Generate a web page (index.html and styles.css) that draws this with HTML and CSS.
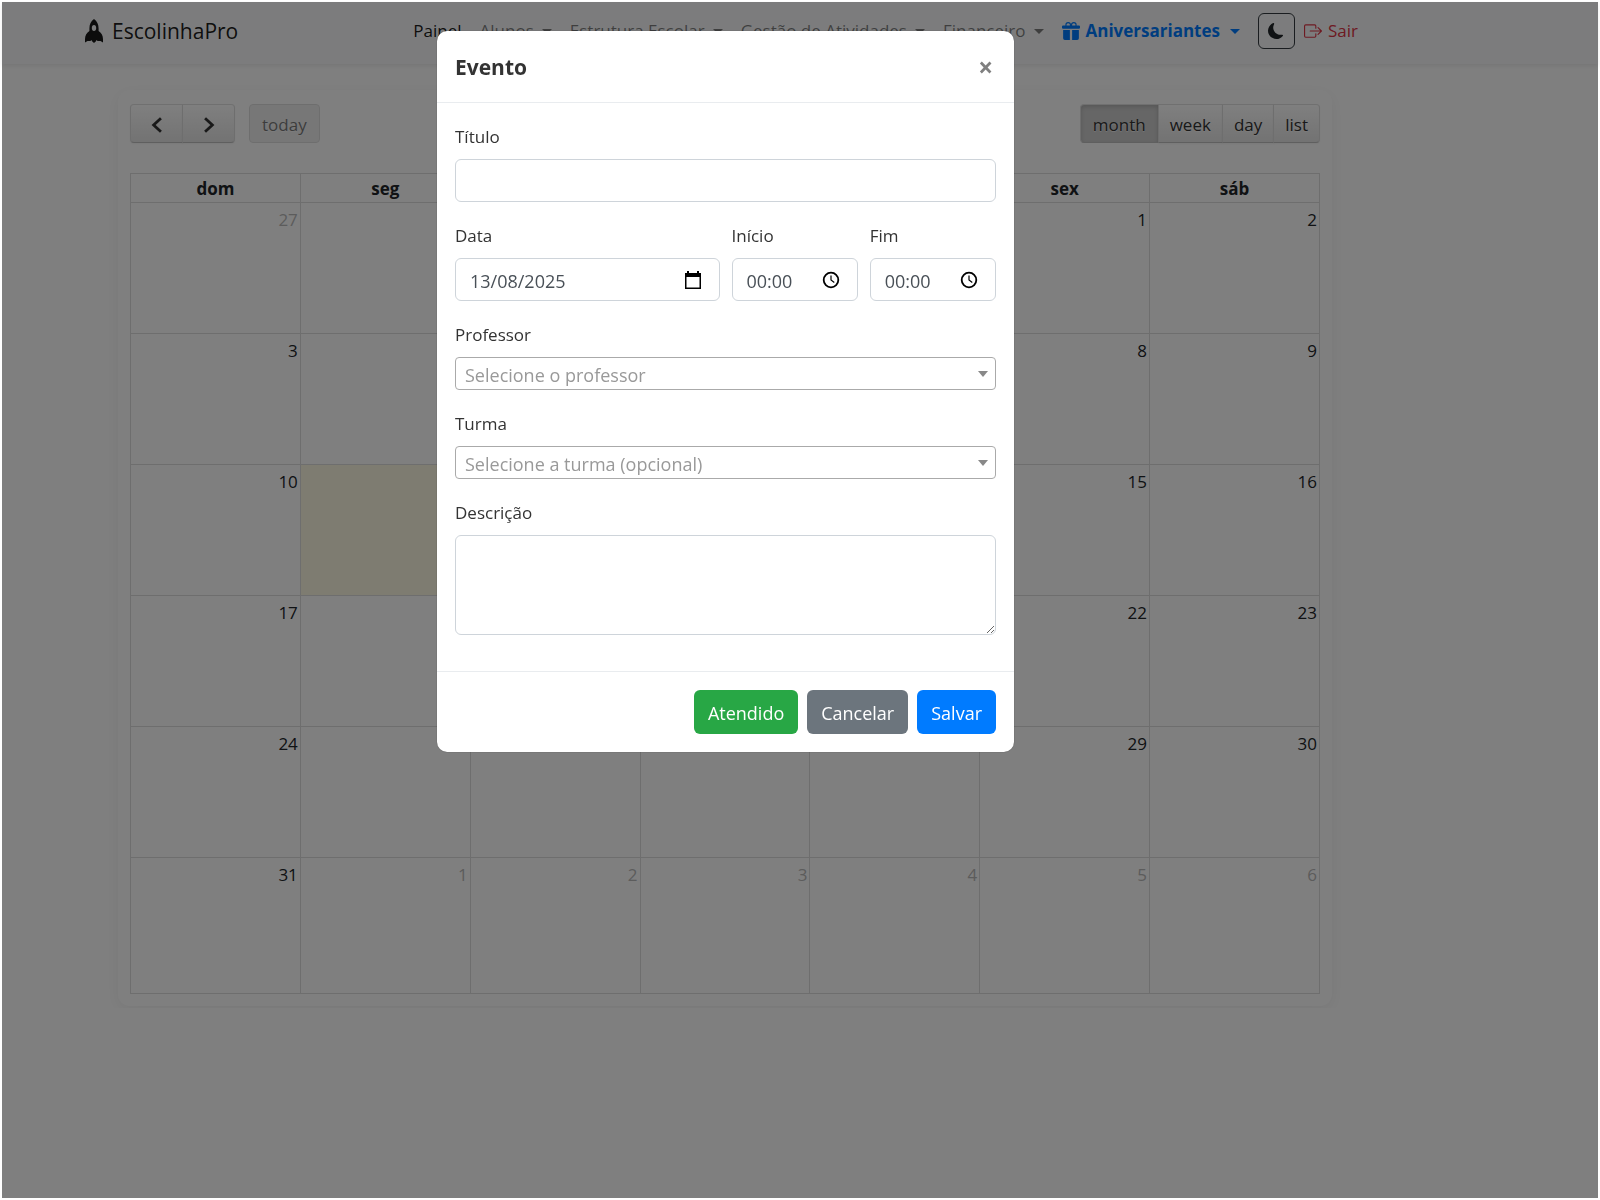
FILE: index.html
```html
<!DOCTYPE html>
<html lang="pt-BR">
<head>
  <meta charset="UTF-8">
  <meta name="viewport" content="width=device-width, initial-scale=1.0">
  <title>EscolinhaPro</title>
  <link rel="stylesheet" href="styles.css">
</head>
<body>
  <nav class="navbar">
    <a class="navbar-brand" href="#">
      <svg class="icon-rocket" viewBox="0 0 18 24" fill="currentColor" aria-hidden="true">
        <path fill-rule="evenodd" d="M9 0c3 2 4.600 5.500 4.600 9.500V12c2.600 1.700 4.400 4.500 4.400 8v3.500L15.500 22h-3l-.8-1-1 1.500L9 24l-1.700-1.500-1-1.500-.8 1h-3L0 23.500V20c0-3.500 1.800-6.300 4.400-8V9.500C4.400 5.500 6 2 9 0zm0 6c-1.300 0-2.200 1.200-2.200 3S7.700 12 9 12s2.200-1.200 2.200-3S10.300 6 9 6z"/>
      </svg>
      EscolinhaPro
    </a>
    <ul class="navbar-nav">
      <li><a class="nav-link active" href="#">Painel</a></li>
      <li><a class="nav-link dropdown" href="#">Alunos</a></li>
      <li><a class="nav-link dropdown" href="#">Estrutura Escolar</a></li>
      <li><a class="nav-link dropdown" href="#">Gestão de Atividades</a></li>
      <li><a class="nav-link dropdown" href="#">Financeiro</a></li>
      <li>
        <a class="nav-link dropdown birthdays" href="#">
          <svg class="icon" viewBox="0 0 16 16" fill="currentColor" aria-hidden="true">
            <path d="M3 2.500a2.500 2.500 0 0 1 5 0 2.500 2.500 0 0 1 5 0v.006c0 .07 0 .27-.038.494H15a1 1 0 0 1 1 1v1a1 1 0 0 1-1 1H1a1 1 0 0 1-1-1V4a1 1 0 0 1 1-1h2.038A3 3 0 0 1 3 2.506zm1.068.5H7v-.5a1.500 1.500 0 1 0-3 0c0 .085.002.274.045.43zM9 3h2.932l.023-.07c.043-.156.045-.345.045-.43a1.500 1.500 0 0 0-3 0zm6 4v7.500a1.500 1.500 0 0 1-1.500 1.500H9V7zM2.500 16A1.500 1.500 0 0 1 1 14.500V7h6v9z"/>
          </svg>
          Aniversariantes
        </a>
      </li>
      <li>
        <button class="btn-theme" type="button" aria-label="Alternar tema">
          <svg class="icon-moon" viewBox="0 0 16 16" fill="currentColor" aria-hidden="true">
            <path d="M6 .278a.77.77 0 0 1 .08.858 7.200 7.200 0 0 0-.878 3.460c0 4.021 3.278 7.277 7.318 7.277q.792-.001 1.533-.16a.79.79 0 0 1 .81.316.73.73 0 0 1-.031.893A8.350 8.350 0 0 1 8.344 16C3.734 16 0 12.286 0 7.710 0 4.266 2.114 1.312 5.124.060A.75.75 0 0 1 6 .278"/>
          </svg>
        </button>
      </li>
      <li>
        <a class="nav-link logout" href="#">
          <svg class="icon" viewBox="0 0 16 16" fill="currentColor" aria-hidden="true">
            <path fill-rule="evenodd" d="M10 12.500a.5.5 0 0 1-.5.5h-8a.5.5 0 0 1-.5-.5v-9a.5.5 0 0 1 .5-.5h8a.5.5 0 0 1 .5.5v2a.5.5 0 0 0 1 0v-2A1.500 1.500 0 0 0 9.500 2h-8A1.500 1.500 0 0 0 0 3.500v9A1.500 1.500 0 0 0 1.500 14h8a1.500 1.500 0 0 0 1.500-1.500v-2a.5.5 0 0 0-1 0z"/>
            <path fill-rule="evenodd" d="M15.854 8.354a.5.5 0 0 0 0-.708l-3-3a.5.5 0 0 0-.708.708L14.293 7.500H5.500a.5.5 0 0 0 0 1h8.793l-2.147 2.146a.5.5 0 0 0 .708.708z"/>
          </svg>
          Sair
        </a>
      </li>
    </ul>
  </nav>

  <main class="container">
    <div class="calendar">
      <div class="toolbar">
        <div class="toolbar-left">
          <div class="btn-group">
            <button class="fc-button fc-arrow" type="button" aria-label="Anterior">
              <svg viewBox="0 0 12 16" aria-hidden="true"><path d="M9.500 2 3 8l6.500 6"/></svg>
            </button>
            <button class="fc-button fc-arrow" type="button" aria-label="Próximo">
              <svg viewBox="0 0 12 16" aria-hidden="true"><path d="M2.500 2 9 8l-6.500 6"/></svg>
            </button>
          </div>
          <button class="fc-button fc-today" type="button" disabled>today</button>
        </div>
        <div class="btn-group">
          <button class="fc-button fc-active" type="button">month</button>
          <button class="fc-button" type="button">week</button>
          <button class="fc-button" type="button">day</button>
          <button class="fc-button" type="button">list</button>
        </div>
      </div>
      <table class="month">
        <thead>
          <tr><th>dom</th><th>seg</th><th>ter</th><th>qua</th><th>qui</th><th>sex</th><th>sáb</th></tr>
        </thead>
        <tbody>
          <tr><td class="other">27</td><td class="other">28</td><td class="other">29</td><td class="other">30</td><td class="other">31</td><td>1</td><td>2</td></tr>
          <tr><td>3</td><td>4</td><td>5</td><td>6</td><td>7</td><td>8</td><td>9</td></tr>
          <tr><td>10</td><td class="today">11</td><td>12</td><td>13</td><td>14</td><td>15</td><td>16</td></tr>
          <tr><td>17</td><td>18</td><td>19</td><td>20</td><td>21</td><td>22</td><td>23</td></tr>
          <tr><td>24</td><td>25</td><td>26</td><td>27</td><td>28</td><td>29</td><td>30</td></tr>
          <tr><td>31</td><td class="other">1</td><td class="other">2</td><td class="other">3</td><td class="other">4</td><td class="other">5</td><td class="other">6</td></tr>
        </tbody>
      </table>
    </div>
  </main>

  <div class="backdrop">
    <form class="modal" role="dialog" aria-labelledby="modal-title">
      <div class="modal-header">
        <h5 class="modal-title" id="modal-title">Evento</h5>
        <button class="close" type="button" aria-label="Fechar">×</button>
      </div>
      <div class="modal-body">
        <div class="form-group">
          <label for="titulo">Título</label>
          <input class="form-control" type="text" id="titulo">
        </div>
        <div class="form-row">
          <div class="form-group">
            <label for="data">Data</label>
            <div class="picker">
              <input class="form-control" type="text" id="data" value="13/08/2025">
              <svg class="picker-icon" viewBox="0 0 18 18" aria-hidden="true">
                <path fill-rule="evenodd" d="M3 0h2v2h8V0h2v2h2v16H1V2h2zM2.500 6v10.500h13V6z"/>
              </svg>
            </div>
          </div>
          <div class="form-group">
            <label for="inicio">Início</label>
            <div class="picker">
              <input class="form-control" type="text" id="inicio" value="00:00">
              <svg class="picker-icon" viewBox="0 0 18 18" aria-hidden="true">
                <circle cx="9" cy="9" r="7.300" fill="none" stroke="#000" stroke-width="1.800"/>
                <path d="M9 4.500V9l3.300 2.500" fill="none" stroke="#000" stroke-width="1.200"/>
              </svg>
            </div>
          </div>
          <div class="form-group">
            <label for="fim">Fim</label>
            <div class="picker">
              <input class="form-control" type="text" id="fim" value="00:00">
              <svg class="picker-icon" viewBox="0 0 18 18" aria-hidden="true">
                <circle cx="9" cy="9" r="7.300" fill="none" stroke="#000" stroke-width="1.800"/>
                <path d="M9 4.500V9l3.300 2.500" fill="none" stroke="#000" stroke-width="1.200"/>
              </svg>
            </div>
          </div>
        </div>
        <div class="form-group">
          <label for="professor">Professor</label>
          <div class="select-wrap">
            <select id="professor"><option>Selecione o professor</option></select>
          </div>
        </div>
        <div class="form-group">
          <label for="turma">Turma</label>
          <div class="select-wrap">
            <select id="turma"><option>Selecione a turma (opcional)</option></select>
          </div>
        </div>
        <div class="form-group">
          <label for="descricao">Descrição</label>
          <textarea class="form-control" id="descricao" rows="3"></textarea>
        </div>
      </div>
      <div class="modal-footer">
        <button class="btn btn-success" type="button">Atendido</button>
        <button class="btn btn-secondary" type="button">Cancelar</button>
        <button class="btn btn-primary" type="submit">Salvar</button>
      </div>
    </form>
  </div>
</body>
</html>
```

FILE: styles.css
```css
* {
  box-sizing: border-box;
}
html {
  background: #fff;
}
body {
  margin: 0;
  padding: 2px;
  font-family: "Open Sans", "Noto Sans", sans-serif;
  font-size: 17px;
  line-height: 28px;
  color: #212529;
}
button, input, select, textarea {
  font-family: inherit;
  font-size: inherit;
  color: inherit;
}

/* navbar */
.navbar {
  display: flex;
  align-items: center;
  justify-content: space-between;
  height: 62px;
  padding: 0 240px 4px 83px;
  background: #f8f9fa;
  box-shadow: 0 2px 4px rgba(0, 0, 0, 0.08);
}
.navbar a {
  text-decoration: none;
}
.navbar-brand {
  display: flex;
  align-items: center;
  gap: 9px;
  font-size: 21px;
  color: rgba(0, 0, 0, 0.9);
}
.icon-rocket {
  width: 18px;
  height: 24px;
}
.navbar-nav {
  display: flex;
  align-items: center;
  margin: 0;
  padding: 0;
  list-style: none;
}
.nav-link {
  display: flex;
  align-items: center;
  padding: 0 9px;
  color: rgba(0, 0, 0, 0.5);
}
.nav-link.active {
  color: rgba(0, 0, 0, 0.9);
}
.dropdown::after {
  content: "";
  margin-left: 8px;
  border: 5px solid transparent;
  border-top-color: currentColor;
  border-bottom: 0;
}
.icon {
  width: 18px;
  height: 18px;
  margin-right: 6px;
}
.birthdays {
  color: #007bff;
  font-weight: bold;
}
.birthdays::after {
  margin-left: 10px;
}
.btn-theme {
  display: flex;
  align-items: center;
  justify-content: center;
  width: 37px;
  height: 36px;
  margin-left: 9px;
  padding: 0;
  background: transparent;
  border: 1px solid #343a40;
  border-radius: 6px;
}
.icon-moon {
  width: 16px;
  height: 16px;
}
.logout {
  padding-right: 0;
  color: #dc3545;
}

/* calendar */
.container {
  padding: 26px 266px 0 116px;
}
.calendar {
  padding: 14px 12px 12px;
  background: #fff;
  border-radius: 12px;
  box-shadow: 0 4px 16px rgba(0, 0, 0, 0.06);
}
.toolbar {
  display: flex;
  justify-content: space-between;
  margin-bottom: 30px;
}
.toolbar-left {
  display: flex;
  gap: 14px;
}
.btn-group {
  display: flex;
}
.fc-button {
  height: 39px;
  padding: 2px 11px 0;
  color: #333;
  text-shadow: 0 1px 1px rgba(255, 255, 255, 0.75);
  background: #f5f5f5 linear-gradient(#fff, #e6e6e6);
  border: 1px solid;
  border-color: #e0e0e0 #dcdcdc #bfbfbf;
  border-radius: 4px;
  box-shadow: inset 0 1px 0 rgba(255, 255, 255, 0.2), 0 1px 2px rgba(0, 0, 0, 0.05);
}
.btn-group .fc-button {
  margin-left: -1px;
  border-radius: 0;
}
.btn-group .fc-button:first-child {
  margin-left: 0;
  border-radius: 4px 0 0 4px;
}
.btn-group .fc-button:last-child {
  border-radius: 0 4px 4px 0;
}
.fc-arrow {
  width: 53px;
}
.fc-arrow svg {
  width: 14px;
  height: 18px;
  margin-top: 6px;
  fill: none;
  stroke: #333;
  stroke-width: 2.5;
}
.fc-today {
  padding: 2px 12px 0;
  background: #e6e6e6;
  border-color: #ccc;
  box-shadow: none;
  opacity: 0.65;
}
.btn-group .fc-active {
  padding: 2px 12px 0;
  background: #ccc;
  box-shadow: inset 0 2px 4px rgba(0, 0, 0, 0.15);
}
.month {
  width: 100%;
  border-collapse: collapse;
  table-layout: fixed;
}
.month th,
.month td {
  border: 1px solid #ddd;
}
.month th {
  height: 29px;
  padding: 2px 0 0;
  line-height: 26px;
}
.month td {
  height: 131px;
  padding: 3px 2px;
  text-align: right;
  vertical-align: top;
}
.month tr:last-child td {
  height: 136px;
}
.month .other {
  color: #b8b8b8;
}
.month .today {
  background: #fcf8e3;
}

/* modal */
.backdrop {
  position: fixed;
  inset: 2px;
  display: flex;
  align-items: flex-start;
  justify-content: center;
  padding: 29px 149px 0 0;
  background: rgba(0, 0, 0, 0.5);
}
.modal {
  width: 577px;
  color: #333;
  background: #fff;
  border-radius: 10px;
  box-shadow: 0 0 1px rgba(0, 0, 0, 0.6);
}
.modal-header {
  display: flex;
  align-items: center;
  justify-content: space-between;
  height: 72px;
  padding: 0 21px 0 18px;
  border-bottom: 1px solid #e9ecef;
}
.modal-title {
  margin: 0;
  font-size: 21px;
}
.close {
  padding: 0;
  font-size: 26px;
  font-weight: bold;
  line-height: 28px;
  color: #808080;
  background: none;
  border: 0;
}
.modal-body {
  padding: 18px;
}
.form-group {
  margin-bottom: 18px;
}
.form-row {
  display: grid;
  grid-template-columns: 264fr 126fr 126fr;
  gap: 12px;
}
label {
  display: block;
  padding-top: 2px;
  margin-bottom: 8px;
}
.form-control {
  display: block;
  width: 100%;
  height: 43px;
  padding: 4px 14px 2px;
  font-size: 18px;
  color: #495057;
  background: #fff;
  border: 1px solid #ced4da;
  border-radius: 6px;
}
textarea.form-control {
  height: 100px;
}
.picker {
  position: relative;
}
.picker-icon {
  position: absolute;
  top: 13px;
  right: 18px;
  width: 18px;
  height: 18px;
}
.select-wrap {
  position: relative;
}
.select-wrap::after {
  content: "";
  position: absolute;
  top: 14px;
  right: 8px;
  border: 5px solid transparent;
  border-top: 6px solid #888;
  border-bottom: 0;
}
select {
  display: block;
  width: 100%;
  height: 33px;
  padding: 3px 9px 0;
  font-size: 18px;
  color: #999;
  background: #fff;
  border: 1px solid #aaa;
  border-radius: 4px;
  appearance: none;
}
.modal-footer {
  display: flex;
  justify-content: flex-end;
  gap: 9px;
  padding: 18px;
  border-top: 1px solid #e9ecef;
}
.btn {
  height: 44px;
  padding: 2px 14px 0;
  font-size: 18px;
  color: #fff;
  border: 0;
  border-radius: 6px;
}
.btn-success {
  background: #28a745;
}
.btn-secondary {
  background: #6c757d;
}
.btn-primary {
  background: #007bff;
}
```
